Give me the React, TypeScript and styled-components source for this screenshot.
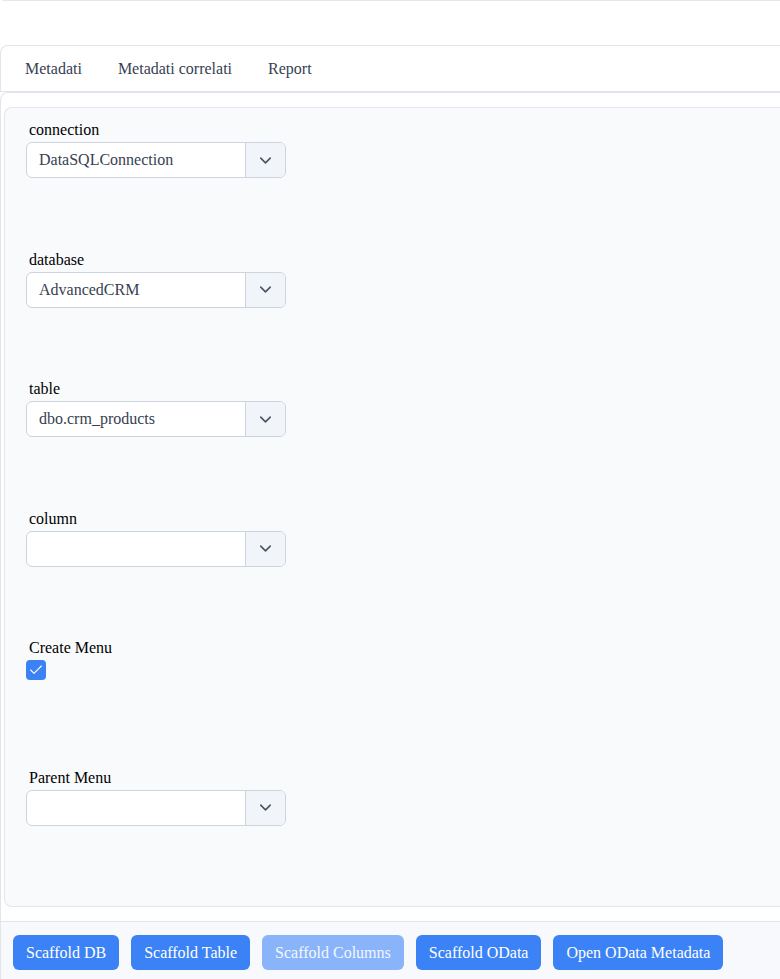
import { createGlobalStyle } from 'styled-components';
import styled from 'styled-components';
import { ChevronDown, Check } from 'lucide-react';

const GlobalStyle = createGlobalStyle`
    html, body {
        margin: 0;
        padding: 0;
        background: #ffffff;
        font-family: 'Liberation Serif', 'Times New Roman', serif;
        font-size: 16px;
        color: #000;
    }
    * {
        box-sizing: border-box;
    }
`;

const Page = styled.div`
    width: 780px;
    height: 979px;
    overflow: hidden;
    display: flex;
    flex-direction: column;
`;

const TopEdge = styled.div`
    flex-shrink: 0;
    height: 1px;
    margin-left: 2px;
    border-bottom: 1px solid #e4e7ee;
    border-bottom-left-radius: 4px;
    margin-bottom: 44px;
`;

const TabBar = styled.nav`
    flex-shrink: 0;
    display: flex;
    align-items: center;
    height: 47px;
    padding-left: 6px;
    border-top: 1px solid #e3e5ec;
    border-left: 1px solid #e3e5ec;
    border-bottom: 1px solid #dfe2ea;
    border-top-left-radius: 8px;
`;

const Tab = styled.button`
    border: 0;
    background: transparent;
    padding: 0 18px;
    font-family: inherit;
    font-size: 16px;
    color: #374151;
    cursor: pointer;
`;

const Body = styled.div`
    flex: 1 0 auto;
    display: flex;
    flex-direction: column;
    border-left: 1px solid #e3e5ec;
    border-top: 1px solid #e3e5ec;
    border-top-left-radius: 8px;
`;

const Content = styled.div`
    flex-shrink: 0;
    padding: 14px 0 14px 3px;
`;

const Panel = styled.section`
    display: grid;
    grid-auto-rows: 129.6px;
    padding: 13px 0 7px 21px;
    background: #f9fafc;
    border: 1px solid #e3e6ec;
    border-right: 0;
    border-radius: 8px 0 0 8px;
`;

const Field = styled.div`
    display: flex;
    flex-direction: column;
    align-items: flex-start;
`;

const Label = styled.label`
    display: block;
    padding-left: 3px;
    height: 21px;
    line-height: 18px;
    color: #000;
`;

const Select = styled.div`
    display: flex;
    width: 260px;
    height: 36px;
    border: 1px solid #ccd4df;
    border-radius: 6px;
    background: #ffffff;
    overflow: hidden;
`;

const Value = styled.div`
    flex: 1;
    display: flex;
    align-items: center;
    padding-left: 12px;
    color: #374151;
`;

const Toggle = styled.div`
    width: 40px;
    display: flex;
    align-items: center;
    justify-content: center;
    background: #f1f4f8;
    border-left: 1px solid #ccd4df;
    color: #4b5563;
`;

const CheckBox = styled.div<{ checked: boolean }>`
    width: 20px;
    height: 20px;
    border-radius: 4px;
    background: ${({ checked }) => (checked ? '#3b82f6' : '#ffffff')};
    border: ${({ checked }) => (checked ? '0' : '1px solid #ccd4df')};
    display: flex;
    align-items: center;
    justify-content: center;
    color: #ffffff;
`;

const Footer = styled.footer`
    flex: 1 0 auto;
    display: flex;
    gap: 12px;
    padding: 13px 12px;
    background: #f8f9fc;
    border-top: 1px solid #e1e4eb;
`;

const Action = styled.button`
    height: 35px;
    padding: 1px 13px 0;
    border: 0;
    border-radius: 6px;
    background: #3b82f6;
    color: #ffffff;
    font-family: inherit;
    font-size: 16px;
    cursor: pointer;

    &:disabled {
        background: #89b4fa;
        color: #f3f7ff;
        cursor: default;
    }
`;

const tabs = ['Metadati', 'Metadati correlati', 'Report'];

const selects = [
    { id: 'connection', label: 'connection', value: 'DataSQLConnection' },
    { id: 'database', label: 'database', value: 'AdvancedCRM' },
    { id: 'table', label: 'table', value: 'dbo.crm_products' },
    { id: 'column', label: 'column', value: '' },
];

const actions = [
    { label: 'Scaffold DB' },
    { label: 'Scaffold Table' },
    { label: 'Scaffold Columns', disabled: true },
    { label: 'Scaffold OData' },
    { label: 'Open OData Metadata' },
];

const Dropdown = ({ value }: { value: string }) => (
    <Select>
        <Value>{value}</Value>
        <Toggle>
            <ChevronDown size={19} strokeWidth={2} />
        </Toggle>
    </Select>
);

const App = () => {
    return (
        <>
            <GlobalStyle />
            <Page>
                <TopEdge />
                <TabBar>
                    {tabs.map((tab) => (
                        <Tab key={tab}>{tab}</Tab>
                    ))}
                </TabBar>
                <Body>
                    <Content>
                        <Panel>
                            {selects.map((s) => (
                                <Field key={s.id}>
                                    <Label>{s.label}</Label>
                                    <Dropdown value={s.value} />
                                </Field>
                            ))}
                            <Field>
                                <Label>Create Menu</Label>
                                <CheckBox checked>
                                    <Check size={16} strokeWidth={1.6} />
                                </CheckBox>
                            </Field>
                            <Field>
                                <Label>Parent Menu</Label>
                                <Dropdown value="" />
                            </Field>
                        </Panel>
                    </Content>
                    <Footer>
                        {actions.map((a) => (
                            <Action key={a.label} disabled={a.disabled}>
                                {a.label}
                            </Action>
                        ))}
                    </Footer>
                </Body>
            </Page>
        </>
    );
};

export default App;
